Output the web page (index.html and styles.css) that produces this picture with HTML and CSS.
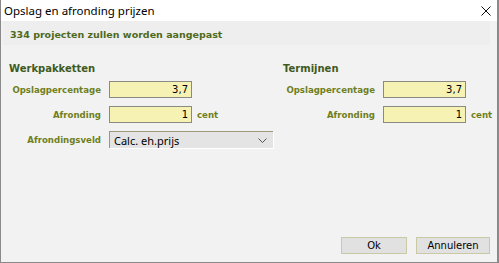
FILE: index.html
```html
<!DOCTYPE html>
<html>
	<head>
		<meta charset="utf-8">
		<title>Opslag en afronding prijzen</title>
		<link rel="stylesheet" href="styles.css">
	</head>

	<body>
		<div class="dialog">
			<header class="titlebar">
				<span class="title">Opslag en afronding prijzen</span>
				<svg class="close" width="10" height="10" viewBox="0 0 10 10">
					<path d="M0.5 0.5 L9.5 9.5 M9.5 0.5 L0.5 9.5" stroke="#111" stroke-width="1"/>
				</svg>
			</header>

			<div class="notice">334 projecten zullen worden aangepast</div>

			<div class="columns">
				<section class="group">
					<h2>Werkpakketten</h2>
					<div class="fields">
						<label>Opslagpercentage</label>
						<div class="field"><input type="text" value="3,7"></div>
						<label>Afronding</label>
						<div class="field"><input type="text" value="1"><span class="unit">cent</span></div>
						<label>Afrondingsveld</label>
						<div class="field">
							<div class="select">
								<span>Calc. eh.prijs</span>
								<svg width="9" height="5" viewBox="0 0 9 5">
									<path d="M0.5 0.5 L4.5 4.5 L8.5 0.5" fill="none" stroke="#555" stroke-width="1"/>
								</svg>
							</div>
						</div>
					</div>
				</section>

				<section class="group last">
					<h2>Termijnen</h2>
					<div class="fields">
						<label>Opslagpercentage</label>
						<div class="field"><input type="text" value="3,7"></div>
						<label>Afronding</label>
						<div class="field"><input type="text" value="1"><span class="unit">cent</span></div>
					</div>
				</section>
			</div>

			<footer class="buttons">
				<button>Ok</button>
				<button class="wide">Annuleren</button>
			</footer>
		</div>
	</body>

</html>
```

FILE: styles.css
```css
html, body {
	margin: 0;
	padding: 0;
	background: #f2f2f2;
	overflow: hidden;
}
.dialog {
	box-sizing: border-box;
	width: 499px;
	height: 263px;
	display: flex;
	flex-direction: column;
	background: #f2f2f2;
	border: 1px solid #8a8a8a;
	border-top: none;
	border-right-width: 2px;
	font-family: "DejaVu Sans", Verdana, sans-serif;
}
.titlebar {
	height: 21px;
	display: flex;
	align-items: center;
	justify-content: space-between;
	padding: 0 6px 0 3px;
	background: #fff;
}
.title {
	font-family: "Noto Sans", "Open Sans", sans-serif;
	font-size: 11.5px;
	color: #000;
}
.notice {
	height: 24px;
	margin: 0 7px 0 2px;
	padding: 8px 0 0 7px;
	box-sizing: border-box;
	background: #eeeeee;
	color: #4e6a1c;
	font-weight: bold;
	font-size: 9.5px;
	line-height: 12px;
}
.columns {
	display: flex;
	padding: 17px 0 0 8px;
}
.group {
	flex: none;
	width: 274px;
}
.group.last {
	flex: 1;
	width: auto;
	min-width: 0;
}
.group h2 {
	margin: 0 0 6px;
	font-size: 10px;
	color: #3f5a1e;
	height: 13px;
	line-height: 13px;
}
.fields {
	display: grid;
	grid-template-columns: 92px auto;
	column-gap: 8px;
	row-gap: 8px;
	align-items: center;
}
.fields label {
	text-align: right;
	font-weight: bold;
	font-size: 8.6px;
	color: #6f7f1c;
}
.field {
	display: flex;
	align-items: center;
}
.field input {
	box-sizing: border-box;
	width: 83px;
	height: 17px;
	margin: 0;
	padding: 0 3px;
	border: 1px solid #8a8a82;
	background: #f6f2b4;
	font-family: "DejaVu Sans", Verdana, sans-serif;
	font-size: 10px;
	color: #000;
	text-align: right;
}
.unit {
	margin-left: 5px;
	font-weight: bold;
	font-size: 8.6px;
	color: #6f7f1c;
}
.select {
	box-sizing: border-box;
	width: 164px;
	height: 17px;
	display: flex;
	align-items: center;
	justify-content: space-between;
	padding: 0 6px 0 4px;
	background: #e4e4e4;
	border-top: 1px solid #9a9a78;
	border-left: 1px solid #9a9a78;
	box-shadow: 1px 1px 0 #fff;
	font-family: "Noto Sans", "Open Sans", sans-serif;
	font-size: 11px;
	color: #000;
}
.buttons {
	margin-top: auto;
	display: flex;
	justify-content: flex-end;
	gap: 9px;
	padding: 0 7px 8px 0;
}
.buttons button {
	box-sizing: border-box;
	width: 66px;
	height: 17px;
	margin: 0;
	padding: 0;
	background: #e1e1e1;
	border: 1px solid #c9c9a6;
	font-family: "DejaVu Sans", Verdana, sans-serif;
	font-size: 10px;
	color: #000;
}
.buttons button.wide {
	width: 74px;
}
```
